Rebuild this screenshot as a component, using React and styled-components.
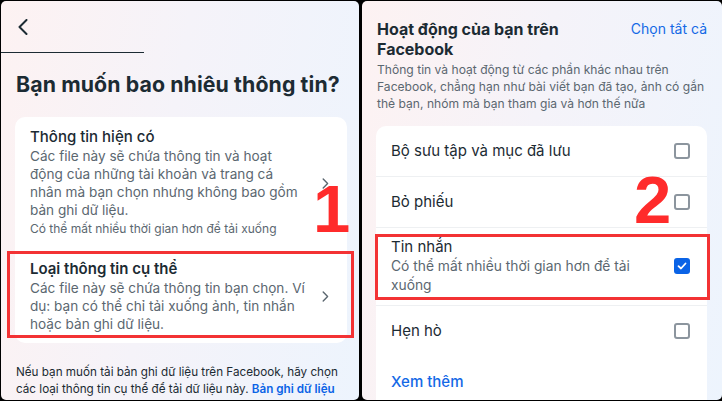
import React from "react";
import styled, { createGlobalStyle } from "styled-components";

const Global = createGlobalStyle`
  html, body { margin: 0; padding: 0; background: #000; }
  body { font-family: Inter, "Noto Sans", sans-serif; -webkit-font-smoothing: antialiased; }
`;

const Frame = styled.div`
  width: 722px;
  height: 401px;
  box-sizing: border-box;
  padding: 1px 0 1px 1px;
  background: #000;
  display: flex;
  gap: 3px;
  overflow: hidden;
`;

const Panel = styled.div`
  position: relative;
  width: ${(p) => p.$w}px;
  height: 100%;
  flex: none;
  border-radius: 5px;
  overflow: hidden;
  box-sizing: border-box;
  background: linear-gradient(100deg, #fdf2f2 0%, #f5f3f9 45%, #edf4fd 100%);
  display: flex;
  flex-direction: column;
  color: #1c2b33;
`;

const TopBar = styled.div`
  width: 143px;
  height: 52px;
  flex: none;
  border-bottom: 1px solid #1c2b33;
  display: flex;
  align-items: center;
  padding-left: 16px;
  box-sizing: border-box;
`;

const Title = styled.h1`
  margin: 16px 0 0 15px;
  font-size: 21.3px;
  line-height: 30px;
  font-weight: 700;
  letter-spacing: 0.1px;
  color: #1c2b33;
`;

const Card = styled.div`
  background: #fff;
  border-radius: 10px;
  margin: ${(p) => p.$m};
  flex: none;
  display: flex;
  flex-direction: column;
`;

const Option = styled.div`
  position: relative;
  display: flex;
  align-items: center;
  padding: 10px 18px 10px 15px;
  gap: 12px;
`;

const OptionText = styled.div`
  flex: 1;
  min-width: 0;
`;

const OptionTitle = styled.div`
  font-size: 15px;
  line-height: 20px;
  font-weight: ${(p) => p.$weight};
  color: #1c2b33;
`;

const Desc = styled.div`
  font-size: 13.6px;
  line-height: 18px;
  color: #5b6770;
`;

const Note = styled.div`
  font-size: 12px;
  line-height: 20px;
  color: #5b6770;
`;

const Footer = styled.p`
  margin: 21px 0 0 15px;
  font-size: 11.7px;
  line-height: 17px;
  white-space: nowrap;
  color: #1c2b33;
`;

const Link = styled.span`
  color: #0a63e6;
  font-weight: 600;
`;

const Highlight = styled.div`
  position: absolute;
  top: ${(p) => p.$t}px;
  bottom: ${(p) => p.$b}px;
  left: ${(p) => p.$l}px;
  right: ${(p) => p.$r}px;
  border: 3px solid #f33234;
  pointer-events: none;
`;

const Marker = styled.div`
  position: absolute;
  left: ${(p) => p.$x}px;
  top: ${(p) => p.$y}px;
  font-family: "Liberation Sans", Arial, sans-serif;
  font-weight: 700;
  font-size: 67px;
  line-height: 67px;
  color: #ff2b2b;
`;

/* right panel */
const Head = styled.div`
  display: flex;
  justify-content: space-between;
  align-items: flex-start;
  padding: 18px 15px 0 15px;
`;

const HeadTitle = styled.div`
  font-size: 16px;
  line-height: 20px;
  font-weight: 700;
  width: 190px;
`;

const SelectAll = styled.div`
  font-size: 14px;
  line-height: 20px;
  color: #1469e6;
`;

const HeadDesc = styled.div`
  margin: 2px 0 0 15px;
  font-size: 12.1px;
  line-height: 17px;
  white-space: nowrap;
  color: #5b6770;
`;

const Row = styled.div`
  position: relative;
  display: flex;
  align-items: center;
  gap: 12px;
  padding: ${(p) => (p.$compact ? "9px" : "15px")} 17px ${(p) => (p.$compact ? "10px" : "15px")} 15px;
  border-bottom: ${(p) => (p.$last ? "none" : "1px solid #eef0f2")};
`;

const RowText = styled.div`
  flex: 1;
  min-width: 0;
`;

const RowTitle = styled.div`
  font-size: 15px;
  line-height: 20px;
  color: #1c2b33;
`;

const RowDesc = styled.div`
  font-size: 13.8px;
  line-height: 19px;
  color: #5b6770;
`;

const Box = styled.div`
  width: 16px;
  height: 16px;
  flex: none;
  box-sizing: border-box;
  border-radius: 3px;
  border: ${(p) => (p.$checked ? "none" : "2px solid #8c959e")};
  background: ${(p) => (p.$checked ? "#0a63e6" : "#fff")};
  display: flex;
  align-items: center;
  justify-content: center;
`;

const More = styled.div`
  padding: 16px 15px 20px;
  font-size: 15px;
  line-height: 20px;
  font-weight: 500;
  color: #1469e6;
`;

const Chevron = () => (
  <svg width="7" height="11" viewBox="0 0 7 11" fill="none" style={{ flex: "none" }}>
    <path d="M1.2 1 L5.6 5.5 L1.2 10" stroke="#5b6770" strokeWidth="1.4" strokeLinecap="round" strokeLinejoin="round" />
  </svg>
);

const Back = () => (
  <svg width="11" height="16" viewBox="0 0 11 16" fill="none">
    <path d="M9.5 1 L2.5 8 L9.5 15" stroke="#1c2b33" strokeWidth="2" strokeLinecap="round" strokeLinejoin="round" />
  </svg>
);

const Check = () => (
  <svg width="10" height="8" viewBox="0 0 10 8" fill="none">
    <path d="M1.5 4.2 L4 6.5 L8.5 1.5" stroke="#fff" strokeWidth="1.8" strokeLinecap="round" strokeLinejoin="round" />
  </svg>
);

export default function App() {
  return (
    <>
      <Global />
      <Frame>
        <Panel $w={358}>
          <TopBar>
            <Back />
          </TopBar>
          <Title>Bạn muốn bao nhiêu thông tin?</Title>
          <Card $m="18px 12px 0 14px">
            <Option>
              <OptionText>
                <OptionTitle $weight={500}>Thông tin hiện có</OptionTitle>
                <Desc>
                  Các file này sẽ chứa thông tin và hoạt
                  <br />
                  động của những tài khoản và trang cá
                  <br />
                  nhân mà bạn chọn nhưng không bao gồm
                  <br />
                  bản ghi dữ liệu.
                </Desc>
                <Note>Có thể mất nhiều thời gian hơn để tải xuống</Note>
              </OptionText>
              <Chevron />
            </Option>
            <Option>
              <OptionText>
                <OptionTitle $weight={600}>Loại thông tin cụ thể</OptionTitle>
                <Desc>
                  Các file này sẽ chứa thông tin bạn chọn. Ví
                  <br />
                  dụ: bạn có thể chỉ tải xuống ảnh, tin nhắn
                  <br />
                  hoặc bản ghi dữ liệu.
                </Desc>
              </OptionText>
              <Chevron />
              <Highlight $t={2} $b={5} $l={-8} $r={-7} />
            </Option>
          </Card>
          <Footer>
            Nếu bạn muốn tải bản ghi dữ liệu trên Facebook, hãy chọn
            <br />
            các loại thông tin cụ thể để tải dữ liệu này. <Link>Bản ghi dữ liệu</Link>
          </Footer>
          <Marker $x={312} $y={174}>1</Marker>
        </Panel>

        <Panel $w={360}>
          <Head>
            <HeadTitle>Hoạt động của bạn trên Facebook</HeadTitle>
            <SelectAll>Chọn tất cả</SelectAll>
          </Head>
          <HeadDesc>
            Thông tin và hoạt động từ các phần khác nhau trên
            <br />
            Facebook, chẳng hạn như bài viết bạn đã tạo, ảnh có gắn
            <br />
            thẻ bạn, nhóm mà bạn tham gia và hơn thế nữa
          </HeadDesc>
          <Card $m="14px 15px 0 14px">
            <Row>
              <RowText>
                <RowTitle>Bộ sưu tập và mục đã lưu</RowTitle>
              </RowText>
              <Box />
            </Row>
            <Row>
              <RowText>
                <RowTitle>Bỏ phiếu</RowTitle>
              </RowText>
              <Box />
            </Row>
            <Row $compact>
              <RowText>
                <RowTitle>Tin nhắn</RowTitle>
                <RowDesc>
                  Có thể mất nhiều thời gian hơn để tải
                  <br />
                  xuống
                </RowDesc>
              </RowText>
              <Box $checked>
                <Check />
              </Box>
              <Highlight $t={6} $b={5} $l={-1} $r={-3} />
            </Row>
            <Row $last>
              <RowText>
                <RowTitle>Hẹn hò</RowTitle>
              </RowText>
              <Box />
            </Row>
            <More>Xem thêm</More>
          </Card>
          <Marker $x={272} $y={165}>2</Marker>
        </Panel>
      </Frame>
    </>
  );
}
